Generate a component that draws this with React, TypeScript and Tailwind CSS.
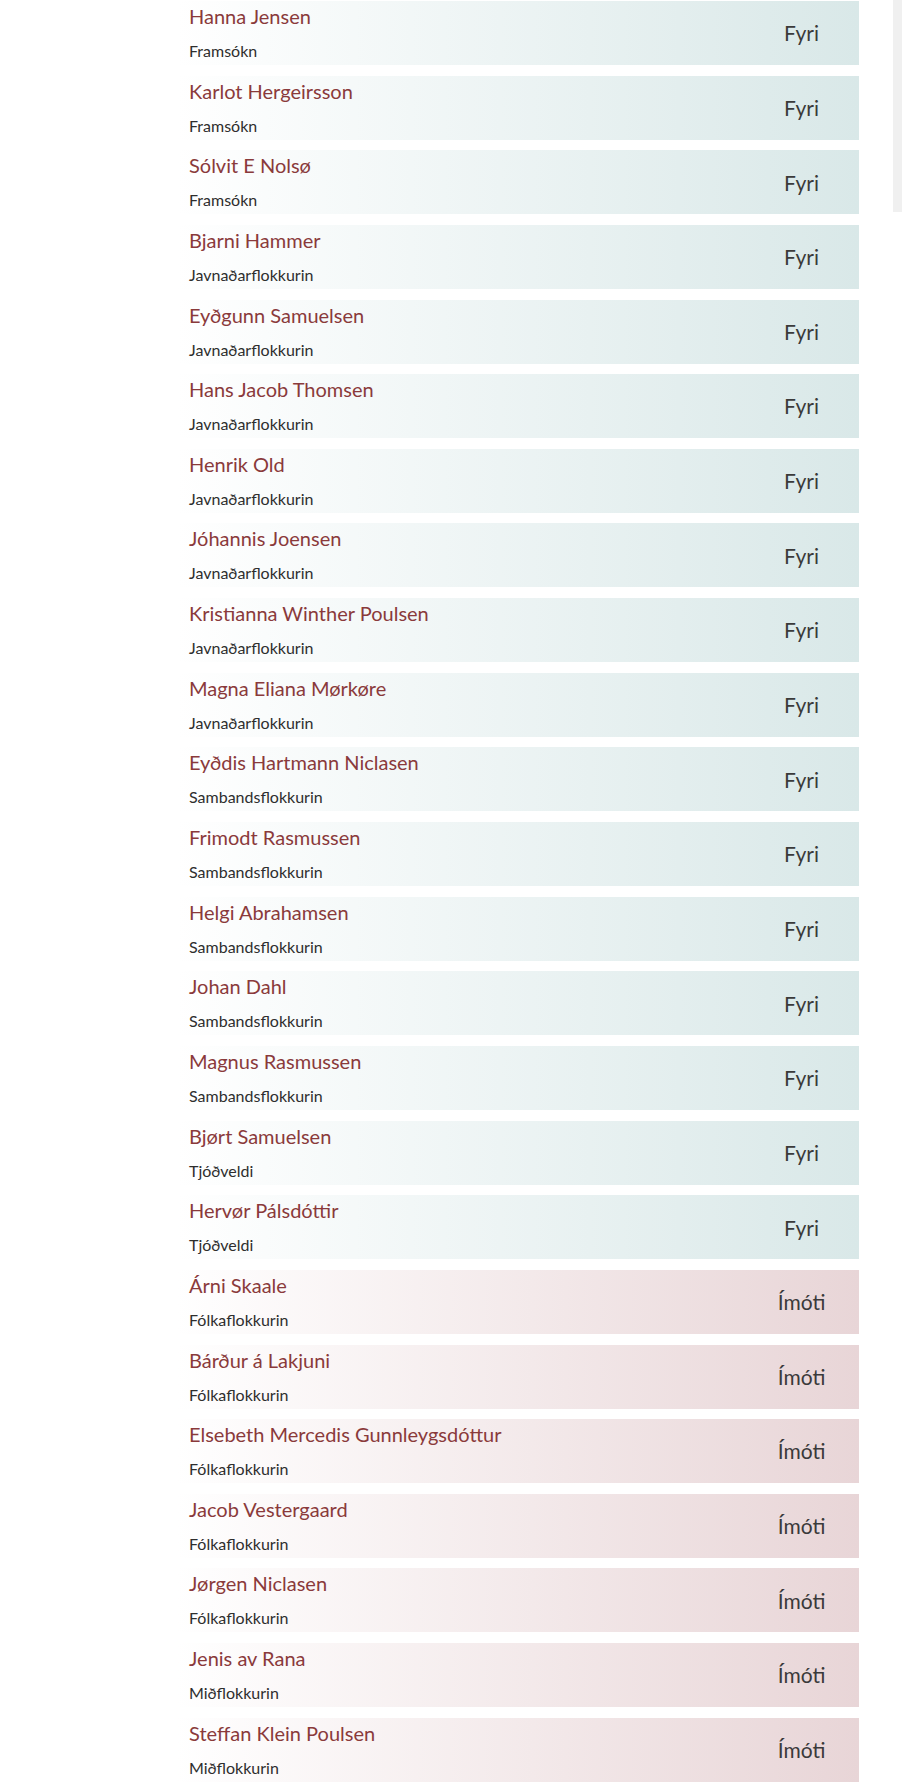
const votes: { name: string; party: string; vote: "Fyri" | "Ímóti" }[] = [
  { name: "Hanna Jensen", party: "Framsókn", vote: "Fyri" },
  { name: "Karlot Hergeirsson", party: "Framsókn", vote: "Fyri" },
  { name: "Sólvit E Nolsø", party: "Framsókn", vote: "Fyri" },
  { name: "Bjarni Hammer", party: "Javnaðarflokkurin", vote: "Fyri" },
  { name: "Eyðgunn Samuelsen", party: "Javnaðarflokkurin", vote: "Fyri" },
  { name: "Hans Jacob Thomsen", party: "Javnaðarflokkurin", vote: "Fyri" },
  { name: "Henrik Old", party: "Javnaðarflokkurin", vote: "Fyri" },
  { name: "Jóhannis Joensen", party: "Javnaðarflokkurin", vote: "Fyri" },
  { name: "Kristianna Winther Poulsen", party: "Javnaðarflokkurin", vote: "Fyri" },
  { name: "Magna Eliana Mørkøre", party: "Javnaðarflokkurin", vote: "Fyri" },
  { name: "Eyðdis Hartmann Niclasen", party: "Sambandsflokkurin", vote: "Fyri" },
  { name: "Frimodt Rasmussen", party: "Sambandsflokkurin", vote: "Fyri" },
  { name: "Helgi Abrahamsen", party: "Sambandsflokkurin", vote: "Fyri" },
  { name: "Johan Dahl", party: "Sambandsflokkurin", vote: "Fyri" },
  { name: "Magnus Rasmussen", party: "Sambandsflokkurin", vote: "Fyri" },
  { name: "Bjørt Samuelsen", party: "Tjóðveldi", vote: "Fyri" },
  { name: "Hervør Pálsdóttir", party: "Tjóðveldi", vote: "Fyri" },
  { name: "Árni Skaale", party: "Fólkaflokkurin", vote: "Ímóti" },
  { name: "Bárður á Lakjuni", party: "Fólkaflokkurin", vote: "Ímóti" },
  { name: "Elsebeth Mercedis Gunnleygsdóttur", party: "Fólkaflokkurin", vote: "Ímóti" },
  { name: "Jacob Vestergaard", party: "Fólkaflokkurin", vote: "Ímóti" },
  { name: "Jørgen Niclasen", party: "Fólkaflokkurin", vote: "Ímóti" },
  { name: "Jenis av Rana", party: "Miðflokkurin", vote: "Ímóti" },
  { name: "Steffan Klein Poulsen", party: "Miðflokkurin", vote: "Ímóti" },
];

export default function App() {
  return (
    <div className="flex bg-white min-h-screen font-['Lato',sans-serif]">
      <div className="w-[177px] shrink-0" />
      <div className="w-[682px] shrink-0 flex flex-col gap-[10.65px] pt-px">
        {votes.map((v) => (
          <div
            key={v.name}
            className={
              v.vote === "Fyri"
                ? "h-[64px] flex items-center bg-linear-to-r from-white to-[#d9e8e8]"
                : "h-[64px] flex items-center bg-linear-to-r from-white to-[#e8d5d7]"
            }
          >
            <div className="flex-1 pl-3 pt-[3px] self-start">
              <div className="text-[20px] leading-[25px] text-[#8a3a3b]">{v.name}</div>
              <div className="mt-[12px] text-[16px] leading-[20px] text-[#2e2e2e]">{v.party}</div>
            </div>
            <div className="w-[115px] text-center text-[21px] text-[#3a3a3a]">{v.vote}</div>
          </div>
        ))}
      </div>
      <div className="flex-1" />
      <div className="w-[9px] h-[212px] bg-[#f0f0f0] shrink-0" />
    </div>
  );
}
